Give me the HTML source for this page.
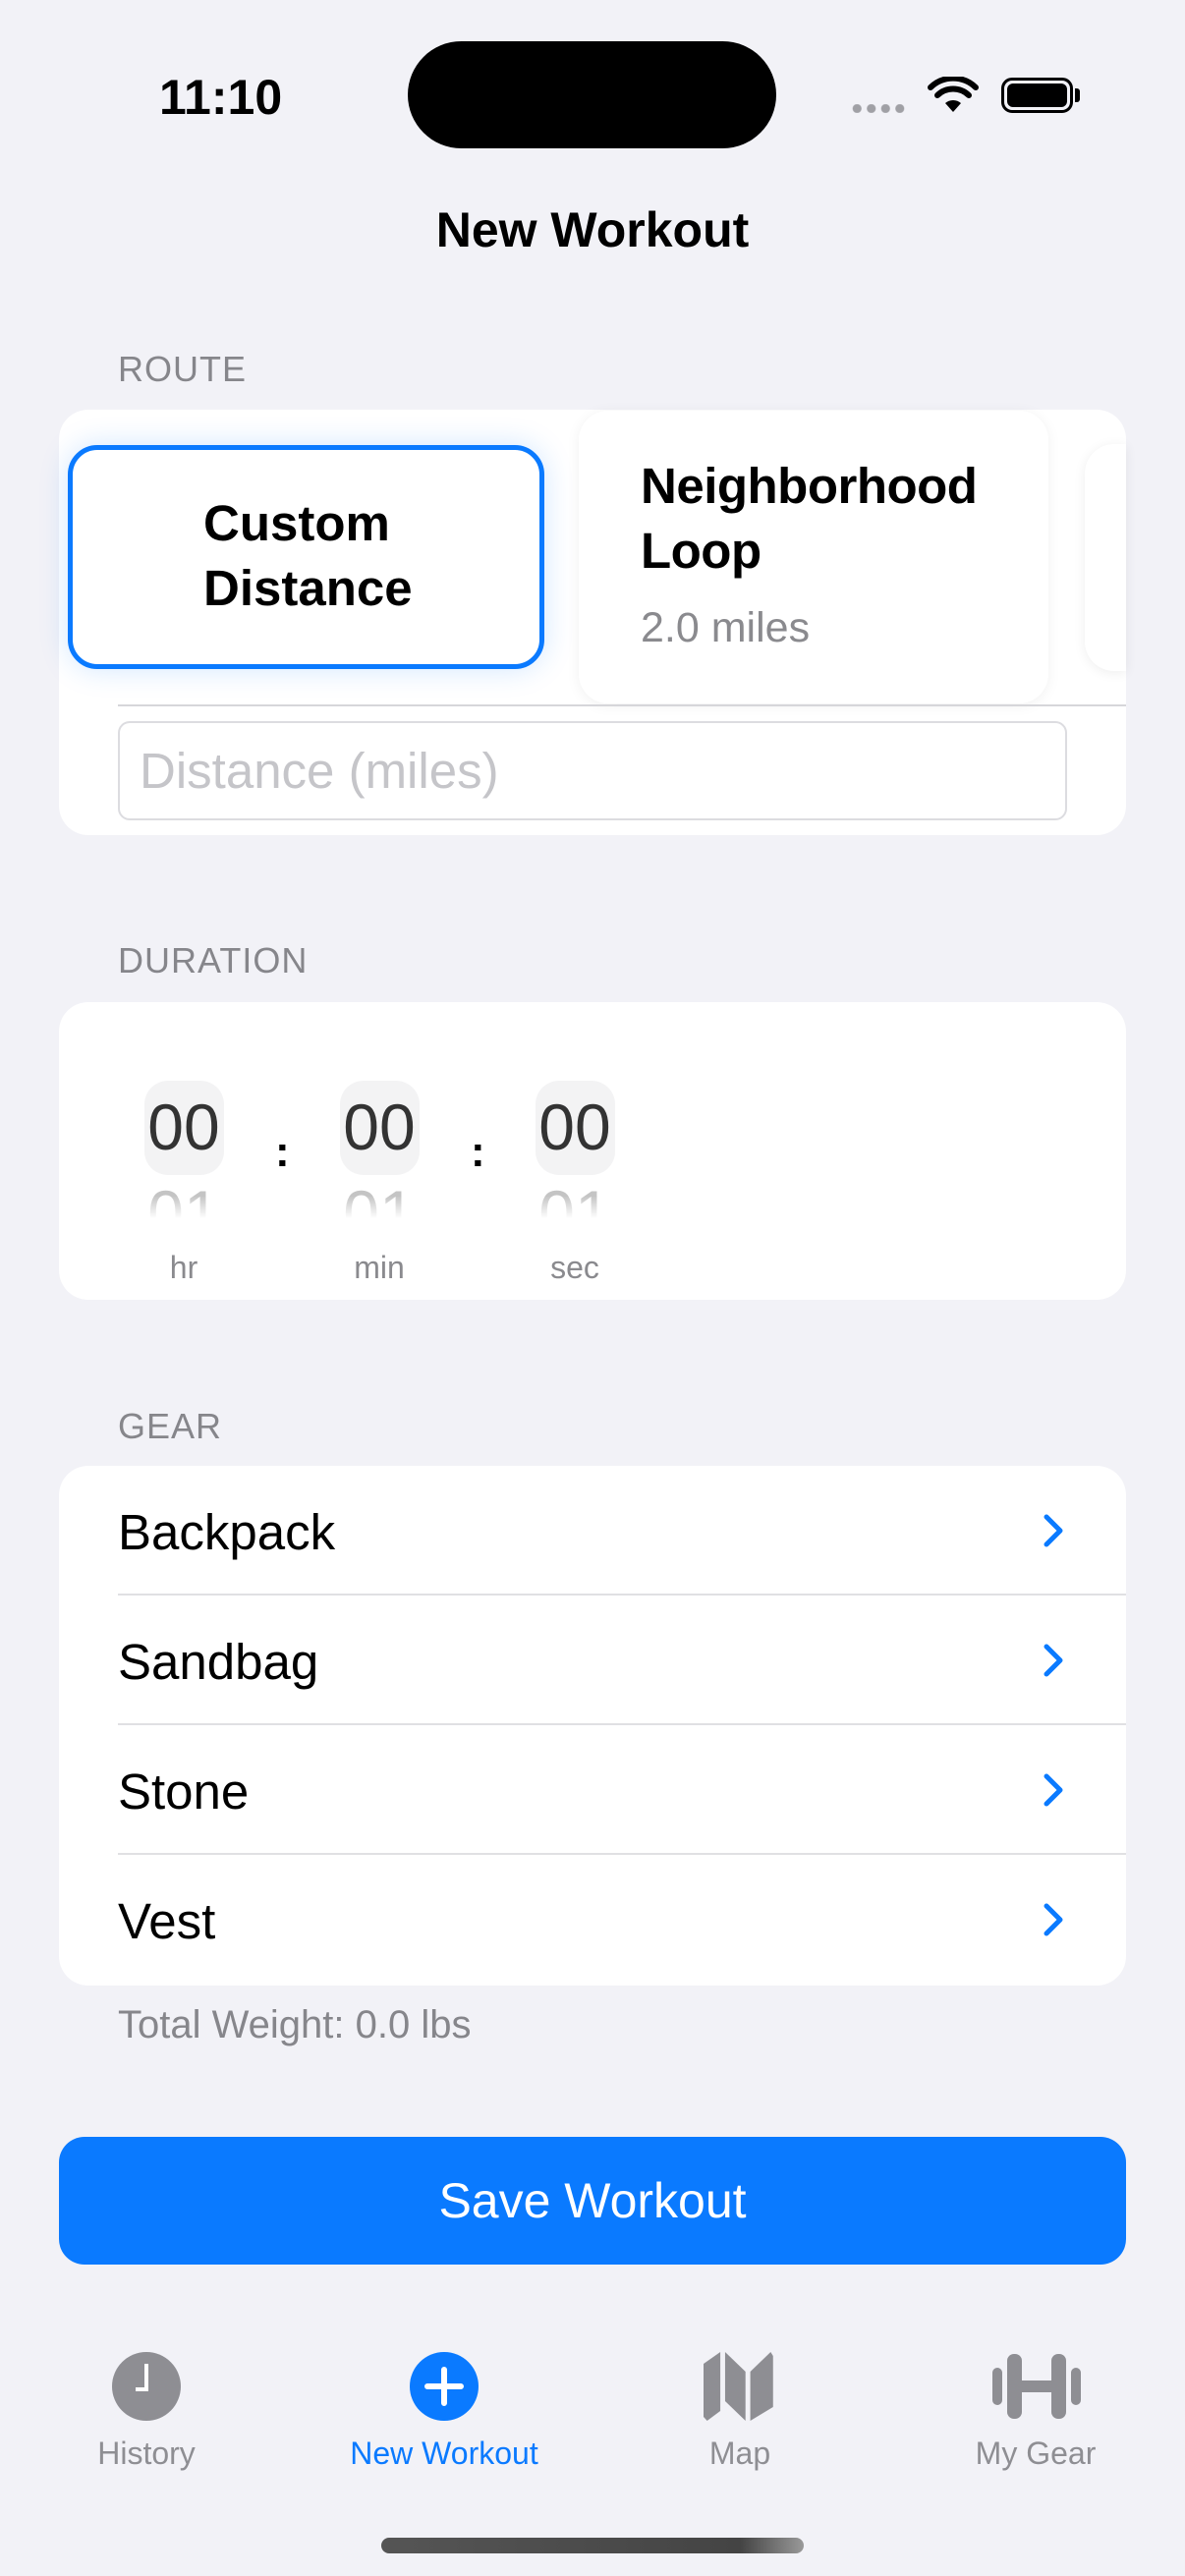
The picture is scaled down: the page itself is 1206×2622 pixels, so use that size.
<!DOCTYPE html>
<html><head><meta charset="utf-8"><style>
*{margin:0;padding:0;box-sizing:border-box}
body{width:1206px;height:2622px;background:#f2f2f7;font-family:"Liberation Sans",sans-serif;position:relative;overflow:hidden;color:#000}
.a{position:absolute}
.lbl{position:absolute;left:120px;font-size:36px;color:#86868b;letter-spacing:1px}
.card{position:absolute;left:60px;width:1086px;background:#fff;border-radius:30px}
.row{position:absolute;left:120px;font-size:51px}
.chev{position:absolute;left:1060px}
.div{position:absolute;left:120px;right:60px;height:2px;background:#e0e0e3}
.box{position:absolute;top:1100px;width:81px;height:96px;background:#f3f3f4;border-radius:24px}
.dig{position:absolute;font-size:66px;color:#333;width:130px;text-align:center}
.fade{position:absolute;font-size:66px;width:130px;text-align:center;height:38px;overflow:hidden;color:#c4c4c4;line-height:66px;-webkit-mask-image:linear-gradient(#000 40%,transparent)}
.col{position:absolute;font-size:44px;font-weight:bold}
.unit{position:absolute;top:1272px;font-size:32px;color:#8a8a8e;width:130px;text-align:center}
.tab{position:absolute;top:2479px;font-size:32px;color:#8e8e93;width:260px;text-align:center}
</style></head><body>
<div class="a" style="left:162px;top:70px;font-size:50px;font-weight:bold">11:10</div>
<div class="a" style="left:415px;top:42px;width:375px;height:109px;background:#000;border-radius:55px"></div>
<div class="a" style="left:865px;top:106px;width:57px;height:9px;background:radial-gradient(circle,#a0a0a5 4px,transparent 5px) 0 0/14.5px 9px repeat-x"></div>
<svg class="a" style="left:944px;top:78px" width="52" height="38" viewBox="0 0 52 38"><path d="M26 36 L18 27 A12 12 0 0 1 34 27Z" fill="#000"/><path d="M10 19 A23 23 0 0 1 42 19" stroke="#000" stroke-width="6" fill="none" stroke-linecap="round"/><path d="M3 11 A33 33 0 0 1 49 11" stroke="#000" stroke-width="6" fill="none" stroke-linecap="round"/></svg>
<div class="a" style="left:1019px;top:79px;width:73px;height:36px;border:3px solid #000;border-radius:11px;padding:3px"><div style="width:100%;height:100%;background:#000;border-radius:6px"></div></div>
<div class="a" style="left:1094px;top:90px;width:5px;height:14px;background:#000;border-radius:0 3px 3px 0"></div>
<div class="a" style="left:0;width:1206px;top:205px;text-align:center;font-size:50px;font-weight:bold">New Workout</div>

<div class="lbl" style="top:355px">ROUTE</div>
<div class="card" style="top:417px;height:433px"></div>
<div class="a" style="left:69px;top:453px;width:485px;height:228px;border:5px solid #0a7aff;border-radius:30px;background:#fff;box-shadow:0 0 30px rgba(10,122,255,.18)"></div>
<div class="a" style="left:207px;top:500px;font-size:51px;font-weight:bold;line-height:66px">Custom<br>Distance</div>
<div class="a" style="left:589px;top:418px;width:478px;height:298px;background:#fff;border-radius:30px;box-shadow:0 2px 14px rgba(0,0,0,.06)"></div>
<div class="a" style="left:652px;top:462px;font-size:51px;font-weight:bold;line-height:66px;letter-spacing:-0.5px">Neighborhood<br>Loop</div>
<div class="a" style="left:652px;top:615px;font-size:43px;color:#8a8a8e">2.0 miles</div>
<div class="a" style="left:1104px;top:452px;width:42px;height:231px;background:#fff;border-radius:30px 0 0 30px;box-shadow:0 2px 12px rgba(0,0,0,.07)"></div>
<div class="a" style="left:120px;top:717px;width:1026px;height:2px;background:#d6d6da"></div>
<div class="a" style="left:120px;top:734px;width:966px;height:101px;border:2px solid #dcdce0;border-radius:12px"></div>
<div class="a" style="left:142px;top:755px;font-size:51px;color:#c5c5c9">Distance (miles)</div>

<div class="lbl" style="top:957px">DURATION</div>
<div class="card" style="top:1020px;height:303px"></div>
<div class="box" style="left:147px"></div><div class="box" style="left:346px"></div><div class="box" style="left:545px"></div>
<div class="dig" style="left:122px;top:1109px">00</div><div class="dig" style="left:321px;top:1109px">00</div><div class="dig" style="left:520px;top:1109px">00</div>
<div class="fade" style="left:122px;top:1202px">01</div><div class="fade" style="left:321px;top:1202px">01</div><div class="fade" style="left:520px;top:1202px">01</div>
<div class="col" style="left:280px;top:1148px">:</div><div class="col" style="left:479px;top:1148px">:</div>
<div class="unit" style="left:122px">hr</div><div class="unit" style="left:321px">min</div><div class="unit" style="left:520px">sec</div>

<div class="lbl" style="top:1431px">GEAR</div>
<div class="card" style="top:1492px;height:529px"></div>
<div class="row" style="top:1530px">Backpack</div>
<div class="row" style="top:1662px">Sandbag</div>
<div class="row" style="top:1794px">Stone</div>
<div class="row" style="top:1926px">Vest</div>
<div class="div" style="top:1622px"></div><div class="div" style="top:1754px"></div><div class="div" style="top:1886px"></div>
<svg class="chev" style="top:1540px" width="24" height="36" viewBox="0 0 24 36"><path d="M5 4 L19 18 L5 32" stroke="#0a7aff" stroke-width="5" fill="none" stroke-linecap="round" stroke-linejoin="round"/></svg>
<svg class="chev" style="top:1672px" width="24" height="36" viewBox="0 0 24 36"><path d="M5 4 L19 18 L5 32" stroke="#0a7aff" stroke-width="5" fill="none" stroke-linecap="round" stroke-linejoin="round"/></svg>
<svg class="chev" style="top:1804px" width="24" height="36" viewBox="0 0 24 36"><path d="M5 4 L19 18 L5 32" stroke="#0a7aff" stroke-width="5" fill="none" stroke-linecap="round" stroke-linejoin="round"/></svg>
<svg class="chev" style="top:1936px" width="24" height="36" viewBox="0 0 24 36"><path d="M5 4 L19 18 L5 32" stroke="#0a7aff" stroke-width="5" fill="none" stroke-linecap="round" stroke-linejoin="round"/></svg>
<div class="a" style="left:120px;top:2039px;font-size:40px;color:#86868b">Total Weight: 0.0 lbs</div>

<div class="a" style="left:60px;top:2175px;width:1086px;height:130px;background:#0a7aff;border-radius:26px;color:#fff;font-size:50px;text-align:center;line-height:130px">Save Workout</div>

<svg class="a" style="left:114px;top:2394px" width="70" height="70" viewBox="0 0 70 70"><circle cx="35" cy="35" r="35" fill="#8e8e93"/><path d="M35 12 V38 H24" stroke="#fff" stroke-width="4" fill="none"/></svg>
<svg class="a" style="left:417px;top:2394px" width="70" height="70" viewBox="0 0 70 70"><circle cx="35" cy="35" r="35" fill="#0a7aff"/><path d="M35 18 V52 M18 35 H52" stroke="#fff" stroke-width="6" stroke-linecap="round"/></svg>
<svg class="a" style="left:716px;top:2394px" width="72" height="70" viewBox="0 0 72 70"><path d="M0 12 L14 0 V60 L3 70 L0 66Z M18 0 L35 20 V70 L18 50Z M39 20 L56 0 L58 4 V56 L39 70Z" transform="scale(1.22 1)" fill="#8e8e93"/></svg>
<svg class="a" style="left:1010px;top:2396px" width="90" height="66" viewBox="0 0 90 66"><rect x="0" y="14" width="10" height="38" rx="5" fill="#8e8e93"/><rect x="15" y="0" width="15" height="66" rx="7" fill="#8e8e93"/><rect x="30" y="27" width="30" height="12" fill="#8e8e93"/><rect x="60" y="0" width="15" height="66" rx="7" fill="#8e8e93"/><rect x="80" y="14" width="10" height="38" rx="5" fill="#8e8e93"/></svg>
<div class="tab" style="left:19px">History</div>
<div class="tab" style="left:322px;color:#0a7aff">New Workout</div>
<div class="tab" style="left:623px">Map</div>
<div class="tab" style="left:924px">My Gear</div>
<div class="a" style="left:388px;top:2583px;width:430px;height:16px;border-radius:8px;background:linear-gradient(90deg,#555,#444 85%,#999)"></div>
</body></html>
